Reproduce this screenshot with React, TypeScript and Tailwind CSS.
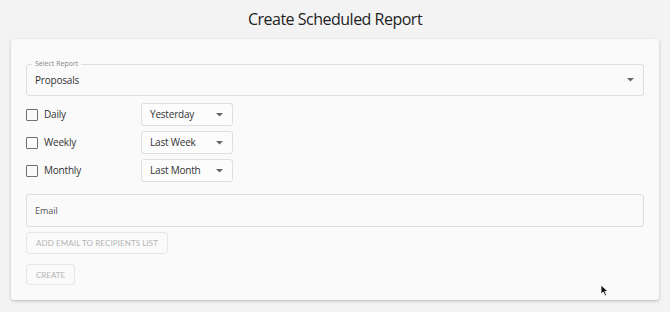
import React from 'react';

const Caret: React.FC = () => (
    <svg width="7" height="4" viewBox="0 0 7 4" className="shrink-0">
        <path d="M0 0 L7 0 L3.5 3.5 Z" fill="#666" />
    </svg>
);

const periods = [
    { label: 'Daily', value: 'Yesterday' },
    { label: 'Weekly', value: 'Last Week' },
    { label: 'Monthly', value: 'Last Month' },
];

const App: React.FC = () => {
    return (
        <div className="relative min-h-[312px] w-[670px] bg-[#f3f3f3] font-['Open_Sans',sans-serif] text-[#333]">
            <h1 className="h-[39px] pt-[8px] text-center text-[16px] leading-[22px] tracking-[-0.5px] text-[#222]">
                Create Scheduled Report
            </h1>
            <div className="mx-[11px] flex w-[648px] flex-col rounded-[3px] bg-[#fafafa] px-[15px] pt-[25px] pb-[15px] shadow-[0_1px_3px_rgba(0,0,0,0.25)]">
                <div className="relative flex h-[32px] items-center justify-between rounded-[3px] border border-[#dedede] pl-[8px] pr-[9px]">
                    <span className="absolute -top-[6px] left-[5px] bg-[#fafafa] px-[3px] text-[7px] leading-[10px] text-[#888]">
                        Select Report
                    </span>
                    <span className="text-[10px] tracking-[-0.2px]">Proposals</span>
                    <Caret />
                </div>
                <div className="mt-[7px] flex flex-col gap-[5px]">
                    {periods.map((p) => (
                        <div key={p.label} className="flex h-[23px] items-center">
                            <div className="h-[12px] w-[12px] rounded-[1px] border-[1.5px] border-[#6e6e6e]" />
                            <span className="ml-[6px] w-[97px] text-[10px] tracking-[-0.2px]">{p.label}</span>
                            <div className="flex h-[23px] w-[92px] items-center justify-between rounded-[3px] border border-[#dedede] bg-[#fcfcfc] pl-[8px] pr-[9px]">
                                <span className="text-[10px] tracking-[-0.2px]">{p.value}</span>
                                <Caret />
                            </div>
                        </div>
                    ))}
                </div>
                <div className="mt-[12px] flex h-[33px] items-center rounded-[3px] border border-[#dedede] pl-[8px] text-[9px] text-[#555]">
                    Email
                </div>
                <div className="mt-[5px] flex">
                    <button className="h-[22px] rounded-[3px] border border-[#e6e6e6] px-[9px] font-['Lato',sans-serif] text-[8px] tracking-[0.1px] text-[#b5b5b5]">
                        ADD EMAIL TO RECIPIENTS LIST
                    </button>
                </div>
                <div className="mt-[10px] flex">
                    <button className="h-[21px] w-[49px] rounded-[3px] border border-[#e6e6e6] font-['Lato',sans-serif] text-[8px] text-[#b5b5b5]">
                        CREATE
                    </button>
                </div>
            </div>
            <svg className="absolute left-[600px] top-[284px]" width="9" height="13" viewBox="0 0 9 13">
                <path d="M1 1 L1 10 L3.2 8 L5 12 L6.5 11.3 L4.8 7.5 L8 7.5 Z" fill="#111" stroke="#fff" strokeWidth="0.8" />
            </svg>
        </div>
    );
};

export default App;
